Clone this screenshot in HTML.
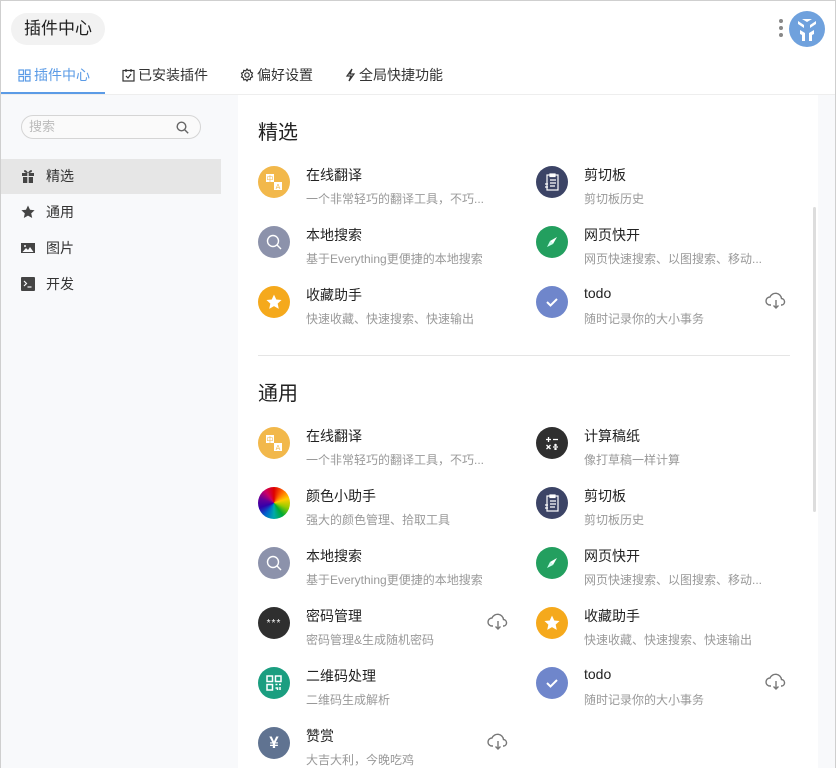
<!DOCTYPE html>
<html><head><meta charset="utf-8"><style>
*{margin:0;padding:0;box-sizing:border-box}
body{width:836px;height:768px;overflow:hidden;background:#fff;font-family:"Liberation Sans","Noto Sans CJK SC",sans-serif;position:relative}
.frame{position:absolute;inset:0;border:1px solid #cfcfcf;border-bottom:none;pointer-events:none;z-index:10}
.a{position:absolute}
.pill{left:11px;top:13px;height:32px;width:94px;border-radius:16px;background:#f2f2f2;font-size:17px;color:#222;line-height:32px;text-align:center}
.tab{top:66px;font-size:14px;color:#333;line-height:18px;display:flex;align-items:center;gap:3px}
.side{left:1px;top:95px;width:237px;height:673px;background:#f8f9fb}
.rstrip{left:818px;top:95px;width:17px;height:673px;background:#f8f9fb}
.search{left:21px;top:115px;width:180px;height:24px;border:1px solid #d5d5d5;border-radius:12px;font-size:13px;color:#bbb;line-height:22px;padding-left:7px;background:#fafafa}
.mi{left:1px;width:220px;height:35px;font-size:14px;color:#333;line-height:35px;padding-left:45px}
.mi svg{position:absolute;left:20px;top:10px}
.h{font-size:20px;color:#222;left:258px}
.ic{width:32px;height:32px;border-radius:50%;display:flex;align-items:center;justify-content:center}
.t{font-size:14px;color:#222}
.d{font-size:12px;color:#999}
.cl{position:absolute}
</style></head><body>
<div class="frame"></div>
<div class="a pill">插件中心</div>
<div class="a" style="left:779px;top:19px;width:4px;height:4px;border-radius:2px;background:#888;box-shadow:0 7px 0 #888,0 14px 0 #888"></div>
<svg class="a" style="left:789px;top:11px" width="36" height="36" viewBox="0 0 36 36"><circle cx="18" cy="18" r="18" fill="#6fa1dd"/><path d="M9 10l6 4v3l-6-4zM27 10l-6 4v3l6-4zM13 8h10l-5 3zM11 19l5 3v8h-3v-6l-2-1zM25 19l-5 3v8h3v-6l2-1z" fill="#fff"/></svg>
<div class="a tab" style="left:18px;color:#5b9be6"><svg width="13" height="13" viewBox="0 0 13 13" fill="none" stroke="#5b9be6" stroke-width="1.2"><rect x="1" y="1" width="4.5" height="4.5"/><rect x="7.5" y="1" width="4.5" height="4.5"/><rect x="1" y="7.5" width="4.5" height="4.5"/><rect x="7.5" y="7.5" width="4.5" height="4.5"/></svg>插件中心</div>
<div class="a" style="left:1px;top:92px;width:104px;height:2px;background:#5b9be6"></div>
<div class="a tab" style="left:122px"><svg width="13" height="14" viewBox="0 0 13 14" fill="none" stroke="#333" stroke-width="1.2"><rect x="1" y="2.5" width="11" height="10.5"/><path d="M4 1v3M9 1v3M4 8l2 2 3-4"/></svg>已安装插件</div>
<div class="a tab" style="left:240px"><svg width="14" height="14" viewBox="0 0 14 14" fill="none" stroke="#333" stroke-width="1.2"><circle cx="7" cy="7" r="2.2"/><path d="M7 1l1.2 1.6 2-.5.4 2 1.9.9-.9 1.9.9 1.9-1.9.9-.4 2-2-.5L7 13l-1.2-1.6-2 .5-.4-2-1.9-.9.9-1.9-.9-1.9 1.9-.9.4-2 2 .5z"/></svg>偏好设置</div>
<div class="a tab" style="left:345px"><svg width="11" height="14" viewBox="0 0 11 14" fill="none" stroke="#333" stroke-width="1.2"><path d="M7 1L2 8h4l-2 5 5-7H5z"/></svg>全局快捷功能</div>
<div class="a" style="left:1px;top:94px;width:834px;height:1px;background:#eee"></div>
<div class="a side"></div>
<div class="a rstrip"></div>
<div class="a" style="left:813px;top:207px;width:3px;height:305px;background:#ddd;border-radius:2px"></div>
<div class="a search">搜索<svg style="position:absolute;right:11px;top:5px" width="13" height="13" viewBox="0 0 13 13" fill="none" stroke="#666" stroke-width="1.4"><circle cx="5.5" cy="5.5" r="4.3"/><path d="M8.7 8.7l3.5 3.5"/></svg></div>
<div class="a mi" style="top:159px;background:#e6e6e6"><svg width="14" height="14" viewBox="0 0 14 14" fill="#444"><rect x="1" y="4" width="12" height="3"/><rect x="2" y="8" width="10" height="6"/><path d="M3 1.5c1.5-1 3 .5 4 2.5-2 0-4.5-1-4-2.5zM11 1.5c-1.5-1-3 .5-4 2.5 2 0 4.5-1 4-2.5z"/><rect x="6.3" y="4" width="1.4" height="10" fill="#e6e6e6"/></svg>精选</div>
<div class="a mi" style="top:195px"><svg width="14" height="14" viewBox="0 0 14 14" fill="#444"><path d="M7 .5l2 4.3 4.6.5-3.4 3.1 1 4.6L7 10.6 2.8 13l1-4.6L.4 5.3 5 4.8z"/></svg>通用</div>
<div class="a mi" style="top:231px"><svg width="14" height="14" viewBox="0 0 14 14"><rect x="0" y="2" width="14" height="10" fill="#444"/><path d="M1.5 11l3.5-4 2 2 2-3 3.5 5z" fill="#f8f9fb"/><circle cx="4" cy="5" r="1" fill="#f8f9fb"/></svg>图片</div>
<div class="a mi" style="top:267px"><svg width="14" height="14" viewBox="0 0 14 14"><rect x="0" y="0" width="14" height="14" rx="1" fill="#444"/><path d="M3 4l2.5 2.5L3 9" stroke="#f8f9fb" stroke-width="1.2" fill="none"/><path d="M6.5 10h4" stroke="#f8f9fb" stroke-width="1.2"/></svg>开发</div>

<div class="a h" style="top:116px">精选</div>
<div class="a" style="left:258px;top:355px;width:532px;height:1px;background:#e5e5e5"></div>
<div class="a h" style="top:377px">通用</div>

<div id="items"></div>
<script>
var I={
tr:'<div class="ic" style="background:#f2b84b"><svg width="18" height="18" viewBox="0 0 18 18"><rect x="1" y="1" width="8" height="8" fill="#fff"/><rect x="9" y="9" width="8" height="8" fill="#fff"/><text x="5" y="8" font-size="7" fill="#f2b84b" text-anchor="middle">中</text><text x="13" y="16" font-size="7" fill="#f2b84b" text-anchor="middle">A</text></svg></div>',
cb:'<div class="ic" style="background:#3c4466"><svg width="16" height="18" viewBox="0 0 16 18" fill="none" stroke="#fff" stroke-width="1.2"><rect x="3" y="2" width="11" height="15"/><rect x="6" y="1" width="5" height="2.5" fill="#fff"/><path d="M6 7h6M6 10h6M6 13h5M1 11h3M1 14h3"/></svg></div>',
se:'<div class="ic" style="background:#8c92ab"><svg width="18" height="18" viewBox="0 0 18 18" fill="none" stroke="#fff" stroke-width="1.4"><circle cx="8" cy="8" r="5.5"/><path d="M12 12l4 4"/></svg></div>',
wb:'<div class="ic" style="background:#239f5f"><svg width="14" height="14" viewBox="0 0 14 14"><path d="M12 2L8 9 5 6z" fill="#fff"/><path d="M2 12l3-6 3 3z" fill="#cfe"/></svg></div>',
fav:'<div class="ic" style="background:#f5a91c"><svg width="16" height="16" viewBox="0 0 14 14" fill="#fff"><path d="M7 .5l2 4.3 4.6.5-3.4 3.1 1 4.6L7 10.6 2.8 13l1-4.6L.4 5.3 5 4.8z"/></svg></div>',
todo:'<div class="ic" style="background:#6f86cb"><svg width="14" height="12" viewBox="0 0 14 12" fill="none" stroke="#fff" stroke-width="2"><path d="M2 6l3.5 3.5L12 3"/></svg></div>',
calc:'<div class="ic" style="background:#2f2f2f"><svg width="14" height="14" viewBox="0 0 14 14" stroke="#fff" stroke-width="1.3"><path d="M1 3.5h5M3.5 1v5M8 3.5h5M1.5 9l4 4M5.5 9l-4 4M8 11h5"/><circle cx="10.5" cy="9" r=".6" fill="#fff"/><circle cx="10.5" cy="13" r=".6" fill="#fff"/></svg></div>',
col:'<div class="ic" style="background:conic-gradient(#d00,#f60,#fc0,#9c0,#0a3,#0aa,#06c,#30a,#609,#c06,#d00)"></div>',
pw:'<div class="ic" style="background:#2f2f2f"><span style="color:#fff;font-size:10px;letter-spacing:1px">***</span></div>',
qr:'<div class="ic" style="background:#1b9e80"><svg width="16" height="16" viewBox="0 0 16 16" fill="none" stroke="#fff" stroke-width="1.5"><rect x="1" y="1" width="5.5" height="5.5"/><rect x="9.5" y="1" width="5.5" height="5.5"/><rect x="1" y="9.5" width="5.5" height="5.5"/><path d="M9.5 9.5h2M13 9.5h2M9.5 13h2v2M14 12v3"/></svg></div>',
zs:'<div class="ic" style="background:#607391"><span style="color:#fff;font-size:17px;font-weight:bold">¥</span></div>'
};
var cloud='<svg width="22" height="18" viewBox="0 0 22 18" fill="none" stroke="#777" stroke-width="1.4"><path d="M6 13H5a4 4 0 010-8 6 6 0 0111.5 1.5A3.3 3.3 0 0117 13h-1"/><path d="M11 8v8M8.5 13.5L11 16l2.5-2.5"/></svg>';
var rows=[
[166,'tr','在线翻译','一个非常轻巧的翻译工具，不巧...',0,'cb','剪切板','剪切板历史',0],
[226,'se','本地搜索','基于Everything更便捷的本地搜索',0,'wb','网页快开','网页快速搜索、以图搜索、移动...',0],
[286,'fav','收藏助手','快速收藏、快速搜索、快速输出',0,'todo','todo','随时记录你的大小事务',1],
[427,'tr','在线翻译','一个非常轻巧的翻译工具，不巧...',0,'calc','计算稿纸','像打草稿一样计算',0],
[487,'col','颜色小助手','强大的颜色管理、拾取工具',0,'cb','剪切板','剪切板历史',0],
[547,'se','本地搜索','基于Everything更便捷的本地搜索',0,'wb','网页快开','网页快速搜索、以图搜索、移动...',0],
[607,'pw','密码管理','密码管理&生成随机密码',1,'fav','收藏助手','快速收藏、快速搜索、快速输出',0],
[667,'qr','二维码处理','二维码生成解析',0,'todo','todo','随时记录你的大小事务',1],
[727,'zs','赞赏','大吉大利，今晚吃鸡',1]
];
var h='';
rows.forEach(function(r){
 var y=r[0];
 [[258,1],[536,5]].forEach(function(c){
  var x=c[0],k=c[1]; if(!r[k])return;
  h+='<div class="a" style="left:'+x+'px;top:'+y+'px">'+I[r[k]]+'</div>';
  h+='<div class="a t" style="left:'+(x+48)+'px;top:'+(y-1)+'px">'+r[k+1]+'</div>';
  h+='<div class="a d" style="left:'+(x+48)+'px;top:'+(y+24)+'px">'+r[k+2]+'</div>';
  if(r[k+3])h+='<div class="a" style="left:'+(x+229)+'px;top:'+(y+6)+'px">'+cloud+'</div>';
 });
});
document.getElementById('items').innerHTML=h;
</script>
</body></html>
